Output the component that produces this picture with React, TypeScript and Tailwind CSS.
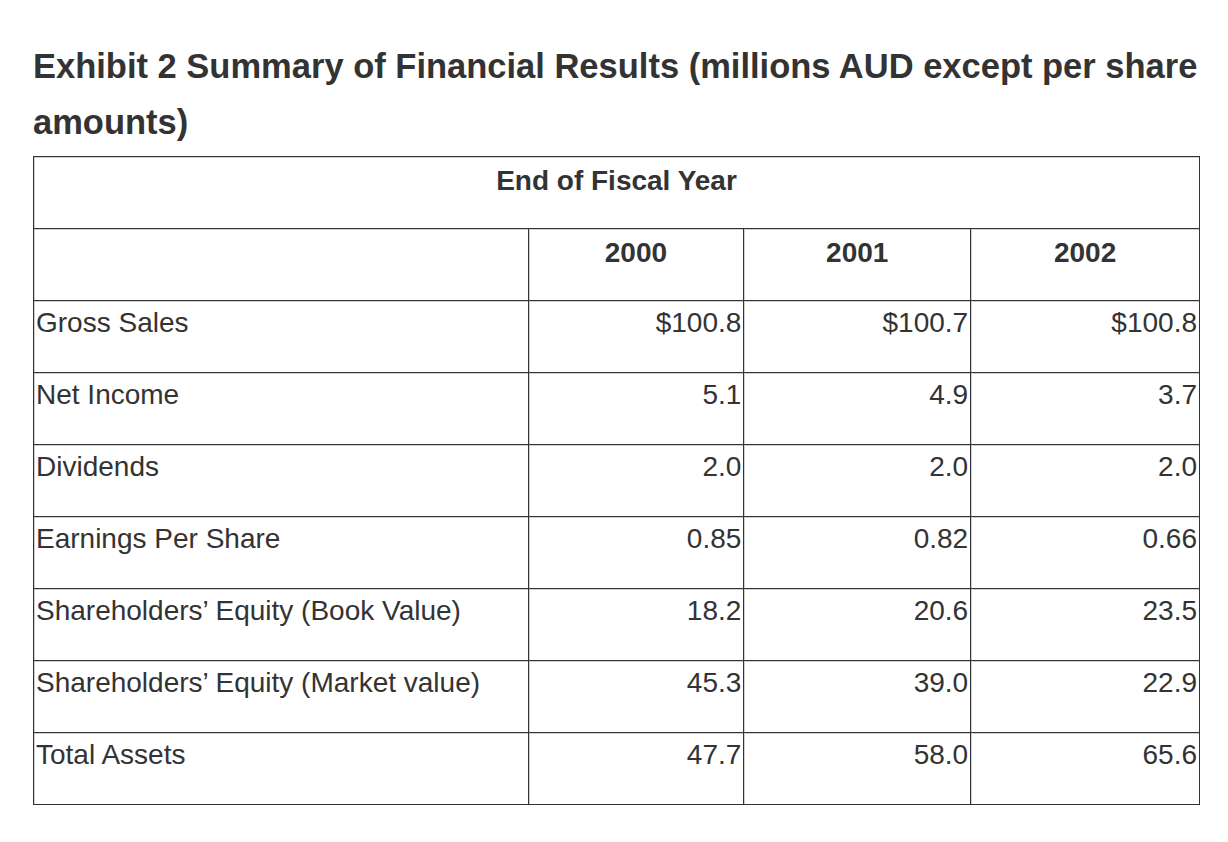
import React from 'react'

const rows = [
  { label: 'Gross Sales', values: ['$100.8', '$100.7', '$100.8'] },
  { label: 'Net Income', values: ['5.1', '4.9', '3.7'] },
  { label: 'Dividends', values: ['2.0', '2.0', '2.0'] },
  { label: 'Earnings Per Share', values: ['0.85', '0.82', '0.66'] },
  { label: 'Shareholders\u2019 Equity (Book Value)', values: ['18.2', '20.6', '23.5'] },
  { label: 'Shareholders\u2019 Equity (Market value)', values: ['45.3', '39.0', '22.9'] },
  { label: 'Total Assets', values: ['47.7', '58.0', '65.6'] },
]

const cell =
  'h-[72px] align-top border-l border-t border-[#333] shadow-[inset_1px_1px_0_#d0d0d0] pt-[6px] leading-[31px]'

export default function App() {
  return (
    <div className="min-h-screen bg-white text-[#333] font-['Liberation_Sans',Arial,sans-serif]">
      <div className="pl-[33px] pt-[38px]">
        {/* Title */}
        <h1 className="w-[1190px] text-[34.5px] leading-[56px] font-bold">
          Exhibit 2 Summary of Financial Results (millions AUD except per share amounts)
        </h1>

        {/* Table */}
        <table className="mt-[6px] w-[1167px] border-separate border-spacing-0 border-r border-b border-[#333] text-[28px]">
          <colgroup>
            <col className="w-[495px]" />
            <col className="w-[216px]" />
            <col className="w-[227px]" />
            <col className="w-[229px]" />
          </colgroup>
          <thead>
            <tr>
              <th colSpan={4} className={`${cell} text-center font-bold pt-[8px]`}>
                End of Fiscal Year
              </th>
            </tr>
            <tr>
              <th className={cell}></th>
              <th className={`${cell} text-center font-bold pt-[8px]`}>2000</th>
              <th className={`${cell} text-center font-bold pt-[8px]`}>2001</th>
              <th className={`${cell} text-center font-bold pt-[8px]`}>2002</th>
            </tr>
          </thead>
          <tbody>
            {rows.map((r) => (
              <tr key={r.label}>
                <td className={`${cell} text-left pl-[2px] font-normal`}>{r.label}</td>
                {r.values.map((v, i) => (
                  <td key={i} className={`${cell} text-right pr-[2px]`}>
                    {v}
                  </td>
                ))}
              </tr>
            ))}
          </tbody>
        </table>
      </div>
    </div>
  )
}
